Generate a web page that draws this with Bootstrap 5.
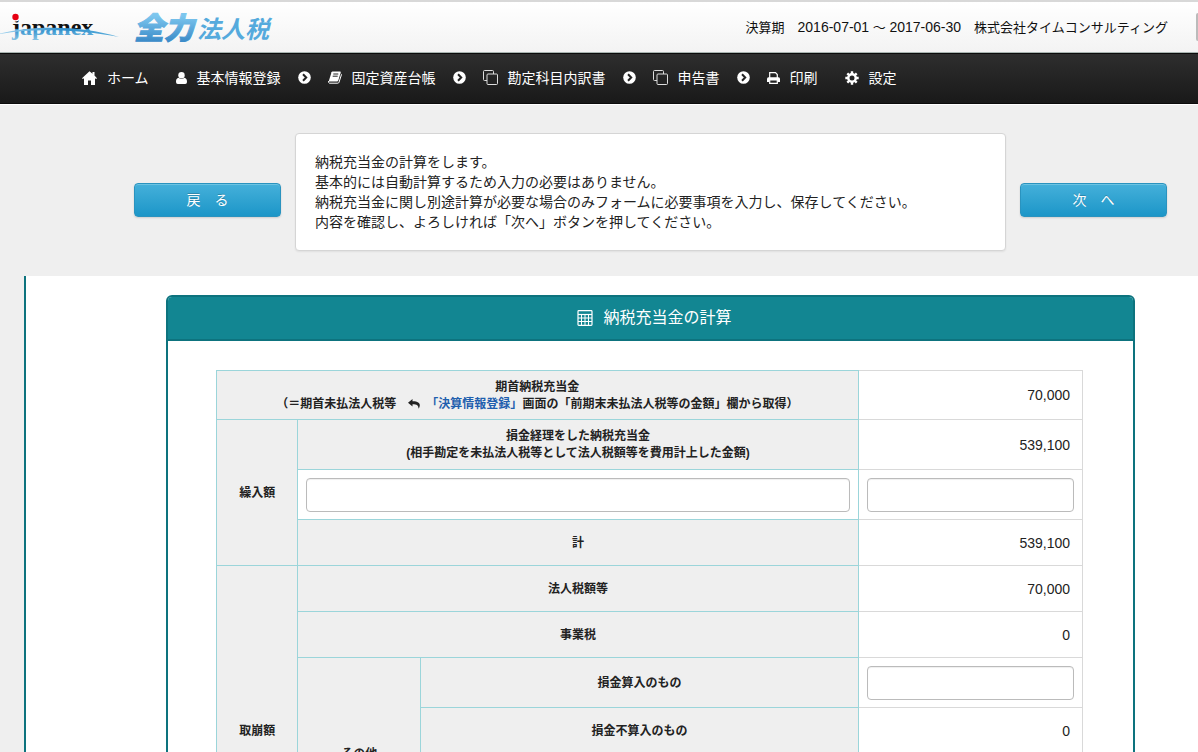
<!DOCTYPE html>
<html lang="ja">
<head>
<meta charset="utf-8">
<meta name="viewport" content="width=device-width, initial-scale=1">
<title>納税充当金の計算 | 全力法人税</title>
<link href="https://cdn.jsdelivr.net/npm/bootstrap@5.3.0/dist/css/bootstrap.min.css" rel="stylesheet">
<style>
  body { background: #efefef; color: #222; font: 14px/20px "Liberation Sans", "Noto Sans CJK JP", sans-serif; }
  .site-head { height: 53px; border-top: 2px solid #d8d8d8; border-bottom: 1px solid #a9b5b1; background: linear-gradient(#fff, #f3f3f3); }
  .period { font-size: 13px; color: #111; white-space: pre; padding-right: 28px; }
  .period time { font-size: 14px; }
  .edge-tab { width: 2px; height: 28px; background: #bbb; border-radius: 2px 0 0 2px; }
  .main-nav { height: 51px; padding: 0 0 2px 82px; background: linear-gradient(#2e2e2e, #191919); border-top: 1px solid #0c0c0c; border-bottom: 1px solid #0c0c0c; box-shadow: 0 1px 0 #fff; gap: 17px; }
  .main-nav a { color: #fff; gap: 10px; white-space: nowrap; }
  .main-nav .wide-gap { margin-right: 10px; }
  .intro { padding: 29px 31px 25px 134px; gap: 14px; }
  .step-btn { flex: 0 0 147px; height: 34px; margin-top: 50px; padding: 0; font-size: 14px; color: #fff; border: 1px solid #2a93bf; border-radius: 4px; background: linear-gradient(#45b0da, #1c96c8); box-shadow: inset 0 1px 0 #6cc3e2, 0 1px 2px #0002; text-shadow: 0 -1px 0 #0003; }
  .step-btn:hover { color: #fff; }
  .note { border: 1px solid #d5d5d5; border-radius: 4px; box-shadow: 0 1px 2px #0001; padding: 18px 19px; }
  .sheet { margin-left: 24px; border-left: 2px solid #0d737e; padding: 19px 63px 40px 140px; }
  .calc { border: 2px solid #0d737e; border-radius: 6px; }
  .calc h1 { font-size: 16px; line-height: 20px; height: 44px; padding-left: 8px; background: #128692; border-bottom: 2px solid #0d737e; border-radius: 4px 4px 0 0; gap: 10px; }
  .calc-body { padding: 29px 50px 30px 48px; }
  .calc-table { width: 100%; table-layout: fixed; border-collapse: separate; border-spacing: 0; border-left: 1px solid #9bd5da; }
  .calc-table th { background: #efefef; border: solid #9bd5da; border-width: 0 1px 1px 0; font-size: 12px; line-height: 17px; text-align: center; padding: 1px 0 0; }
  .calc-table td { border: solid #d9d9d9; border-width: 0 1px 1px 0; text-align: right; padding: 0 12px 0 0; }
  .calc-table tr:first-child > * { border-top-width: 1px; }
  .calc-table td.entry { padding: 0 8px; }
  .calc-table td.teal { border-color: #9bd5da; }
  .calc-table a { color: #1f5fae; text-decoration: none; }
  .row-s { height: 46px; }
  .row-l { height: 50px; }
  .calc-table .form-control { height: 34px; border: 1px solid #bbb; border-radius: 4px; box-shadow: inset 0 1px 1px #0001; font-size: 14px; }
</style>
</head>
<body>
<svg class="d-none">
  <symbol id="chev" viewBox="0 0 13 13"><circle cx="6.500" cy="6.500" r="6.300" fill="#fff"/><path d="M5 3.300 8.200 6.500 5 9.700" fill="none" stroke="#222" stroke-width="2"/></symbol>
  <symbol id="copy" viewBox="0 0 15 15"><path d="M4 10.500H1.500a1 1 0 0 1-1-1v-8a1 1 0 0 1 1-1h8a1 1 0 0 1 1 1V4" fill="none" stroke="#ddd"/><rect x="4" y="4" width="10.500" height="10.500" rx="1" fill="none" stroke="#ddd"/></symbol>
</svg>

<header class="site-head d-flex align-items-center">
  <a href="#" class="d-block" aria-label="japanex 全力法人税">
    <svg width="280" height="50" viewBox="0 2 280 50" class="d-block">
      <defs>
        <linearGradient id="jp" gradientUnits="userSpaceOnUse" x1="0" y1="20" x2="0" y2="40"><stop offset=".42" stop-color="#111"/><stop offset=".46" stop-color="#2f8fcc"/><stop offset="1" stop-color="#86c3e4"/></linearGradient>
        <linearGradient id="sw"><stop offset="0" stop-color="#9ed2ee"/><stop offset=".55" stop-color="#2f8fcc"/><stop offset="1" stop-color="#5fb0dc"/></linearGradient>
        <linearGradient id="zn" gradientUnits="userSpaceOnUse" x1="0" y1="16" x2="0" y2="41"><stop offset="0" stop-color="#7cc6ee"/><stop offset="1" stop-color="#3c8cc9"/></linearGradient>
      </defs>
      <text x="12" y="35" font-family="Liberation Serif, serif" font-weight="700" font-size="24" fill="url(#jp)">japanex</text>
      <circle cx="15.500" cy="17" r="4.500" fill="#fcfcfc"/>
      <circle cx="15.500" cy="17" r="3.200" fill="#e60012"/>
      <path d="M0 33.500C34 25 82 25.500 119 37 84 30.500 38 27.500 0 34Z" fill="url(#sw)"/>
      <text x="134" y="39" font-family="Noto Sans CJK JP, sans-serif" font-weight="900" font-style="italic" font-size="30" fill="url(#zn)" stroke="url(#zn)">全力</text>
      <text x="197" y="38" font-family="Noto Sans CJK JP, sans-serif" font-weight="700" font-style="italic" font-size="24" fill="#55aadd">法人税</text>
    </svg>
  </a>
  <div class="period ms-auto">決算期　<time>2016-07-01</time> 〜 <time>2017-06-30</time>　株式会社タイムコンサルティング</div>
  <div class="edge-tab"></div>
</header>

<nav class="main-nav d-flex align-items-center">
  <a href="#" class="d-flex align-items-center text-decoration-none wide-gap"><svg width="15" height="14" viewBox="0 0 15 14" fill="#fff"><path d="M7.500.2 0 7.200l.9.900 1.100-.9V14h4V9.500h3V14h4V7.200l1.100.9.900-.9L12.500 4.500V1h-2v1.700Z"/></svg>ホーム</a>
  <a href="#" class="d-flex align-items-center text-decoration-none"><svg width="11" height="12" viewBox="0 0 11 12" fill="#fff"><circle cx="5.500" cy="3.200" r="3.200"/><path d="M2.300 5.800c2 1.500 4.400 1.500 6.400 0C10.500 6.500 11 8 11 10q0 2-1.800 2H1.800Q0 12 0 10c0-2 .5-3.500 2.300-4.200Z"/></svg>基本情報登録</a>
  <svg width="13" height="13"><use href="#chev"/></svg>
  <a href="#" class="d-flex align-items-center text-decoration-none"><svg width="14" height="13" viewBox="0 0 14 13"><path d="M4.500.5H12q1 0 .7 1L10.200 9.700q-.3.800-1.200.8H1.200Q.7 10.500 1 9.500L3.500 1.300Q3.800.5 4.500.5Z" fill="#fff"/><path d="M13 2.800q.6.300.4 1l-2.400 7.500q-.3.900-1.200.9H1.500Q.3 12 .6 10" fill="none" stroke="#fff"/><path d="M5.300 3h5M4.700 5.200h5" stroke="#222"/></svg>固定資産台帳</a>
  <svg width="13" height="13"><use href="#chev"/></svg>
  <a href="#" class="d-flex align-items-center text-decoration-none"><svg width="15" height="15"><use href="#copy"/></svg>勘定科目内訳書</a>
  <svg width="13" height="13"><use href="#chev"/></svg>
  <a href="#" class="d-flex align-items-center text-decoration-none"><svg width="15" height="15"><use href="#copy"/></svg>申告書</a>
  <svg width="13" height="13"><use href="#chev"/></svg>
  <a href="#" class="d-flex align-items-center text-decoration-none wide-gap"><svg width="13" height="12" viewBox="0 0 13 12"><path d="M2.700 6V.7h5.800l1.800 1.800V6" fill="none" stroke="#fff" stroke-width="1.200"/><path d="M1.500 5.300h10Q13 5.300 13 7v3h-2.300V8.500H2.300V10H0V7q0-1.700 1.500-1.700Z" fill="#fff"/><path d="M2.700 8v3.300h7.600V8" fill="none" stroke="#fff" stroke-width="1.200"/></svg>印刷</a>
  <a href="#" class="d-flex align-items-center text-decoration-none"><svg width="14" height="14" viewBox="-7 -7 14 14"><circle r="3.700" fill="none" stroke="#fff" stroke-width="2.400"/><path d="M0-6.700V-4M0 6.700V4M-6.700 0H-4M6.700 0H4M-4.700-4.700-3-3M4.700-4.700 3-3M-4.700 4.700-3 3M4.700 4.700 3 3" stroke="#fff" stroke-width="2.400"/></svg>設定</a>
</nav>

<main>
  <section class="intro d-flex align-items-start">
    <button type="button" class="btn step-btn">戻　る</button>
    <p class="note bg-white flex-grow-1 mb-0">納税充当金の計算をします。<br>基本的には自動計算するため入力の必要はありません。<br>納税充当金に関し別途計算が必要な場合のみフォームに必要事項を入力し、保存してください。<br>内容を確認し、よろしければ「次へ」ボタンを押してください。</p>
    <button type="button" class="btn step-btn">次　へ</button>
  </section>

  <section class="sheet bg-white">
    <div class="calc">
      <h1 class="d-flex align-items-center justify-content-center text-white mb-0 fw-normal"><svg width="16" height="16" viewBox="0 0 16 16" fill="none" stroke="#fff"><rect x="1" y=".7" width="14" height="14.600" rx=".8" stroke-width="1.200"/><path d="M1 4.500h14" stroke-width="1.200"/><path d="M1 8h14M1 11.500h14M4.500 4.500v11M8 4.500v11M11.500 4.500v11"/></svg>納税充当金の計算</h1>
      <div class="calc-body">
        <table class="calc-table">
          <colgroup><col style="width:9.4%"><col style="width:14.2%"><col><col style="width:25.9%"></colgroup>
          <tbody>
            <tr class="row-l"><th colspan="3" scope="row">期首納税充当金<br>（＝期首未払法人税等　<svg width="12" height="10" viewBox="0 0 12 10" fill="#222"><path d="M0 3.700 4.500 0v2.300C9.500 2.200 12 4 11.800 6.500q-.1 1.800-1.300 3.300C10.700 6.500 9 5.200 4.500 5.200v2.200Z"/></svg>　<a href="#">「決算情報登録」</a>画面の「前期末未払法人税等の金額」欄から取得）</th><td>70,000</td></tr>
            <tr class="row-l"><th rowspan="3" scope="rowgroup">繰入額</th><th colspan="2" scope="row">損金経理をした納税充当金<br>(相手勘定を未払法人税等として法人税額等を費用計上した金額)</th><td>539,100</td></tr>
            <tr class="row-l"><td colspan="2" class="entry teal"><input class="form-control" type="text" aria-label="繰入額の項目名"></td><td class="entry"><input class="form-control text-end" type="text" aria-label="繰入額の金額"></td></tr>
            <tr class="row-s"><th colspan="2" scope="row">計</th><td>539,100</td></tr>
            <tr class="row-s"><th rowspan="7" scope="rowgroup">取崩額</th><th colspan="2" scope="row">法人税額等</th><td>70,000</td></tr>
            <tr class="row-s"><th colspan="2" scope="row">事業税</th><td>0</td></tr>
            <tr class="row-l"><th rowspan="4" scope="rowgroup">その他</th><th scope="row">損金算入のもの</th><td class="entry"><input class="form-control text-end" type="text" aria-label="損金算入のもの"></td></tr>
            <tr class="row-s"><th scope="row">損金不算入のもの</th><td>0</td></tr>
            <tr class="row-l"><td class="entry teal"><input class="form-control" type="text" aria-label="取崩額の項目名"></td><td class="entry"><input class="form-control text-end" type="text" aria-label="取崩額の金額"></td></tr>
            <tr class="row-s"><th scope="row">仮払税金消却</th><td>0</td></tr>
            <tr class="row-s"><th colspan="2" scope="row">計</th><td>70,000</td></tr>
          </tbody>
        </table>
      </div>
    </div>
  </section>
</main>
<script src="https://cdn.jsdelivr.net/npm/bootstrap@5.3.0/dist/js/bootstrap.bundle.min.js"></script>
</body>
</html>
